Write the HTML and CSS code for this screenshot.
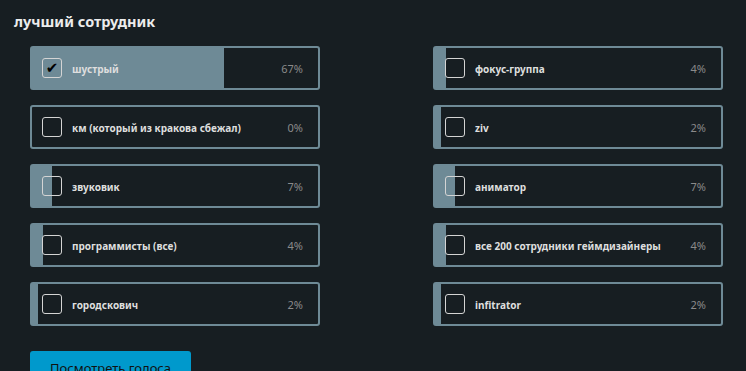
FILE: index.html
```html
<!DOCTYPE html>
<html lang="ru">
<head>
    <meta charset="UTF-8">
    <title>лучший сотрудник</title>
    <link rel="stylesheet" href="styles.css">
</head>
<body>
<div class="poll">
    <h3 class="poll-title">лучший сотрудник</h3>
    <ul class="answers">
        <li class="answer" style="--p:67%"><span class="box checked">&#10004;</span><span class="name">шустрый</span><span class="pct">67%</span></li>
        <li class="answer" style="--p:4%"><span class="box"></span><span class="name">фокус-группа</span><span class="pct">4%</span></li>
        <li class="answer" style="--p:0%"><span class="box"></span><span class="name">км (который из кракова сбежал)</span><span class="pct">0%</span></li>
        <li class="answer" style="--p:2%"><span class="box"></span><span class="name">ziv</span><span class="pct">2%</span></li>
        <li class="answer" style="--p:7%"><span class="box"></span><span class="name">звуковик</span><span class="pct">7%</span></li>
        <li class="answer" style="--p:7%"><span class="box"></span><span class="name">аниматор</span><span class="pct">7%</span></li>
        <li class="answer" style="--p:4%"><span class="box"></span><span class="name">программисты (все)</span><span class="pct">4%</span></li>
        <li class="answer" style="--p:4%"><span class="box"></span><span class="name">все 200 сотрудники геймдизайнеры</span><span class="pct">4%</span></li>
        <li class="answer" style="--p:2%"><span class="box"></span><span class="name">городскович</span><span class="pct">2%</span></li>
        <li class="answer" style="--p:2%"><span class="box"></span><span class="name">infitrator</span><span class="pct">2%</span></li>
    </ul>
    <button class="results">Посмотреть голоса</button>
</div>
</body>
</html>
```

FILE: styles.css
```css
body, ul, li, h3 {
    margin: 0;
    padding: 0;
    list-style: none;
}

body {
    background: #171e22;
    font-family: "Noto Sans", sans-serif;
    color: #dcdcdc;
}

.poll {
    padding: 10px 0 0 30px;
}

.poll-title {
    margin-left: -16px;
    font-size: 14.5px;
    font-weight: bold;
    line-height: 22px;
    color: #ececec;
    height: 36px;
}

.answers {
    display: grid;
    grid-template-columns: 290px 290px;
    column-gap: 113px;
    row-gap: 15px;
}

.answer {
    height: 44px;
    box-sizing: border-box;
    border: 2px solid #6e8a96;
    border-radius: 3px;
    padding: 0 15px 0 10px;
    display: flex;
    align-items: center;
    background: linear-gradient(to right, #6e8a96 var(--p), transparent var(--p));
}

.box {
    width: 20px;
    height: 20px;
    box-sizing: border-box;
    border: 1px solid #d4d4d4;
    border-radius: 3px;
    margin-right: 10px;
    display: flex;
    align-items: center;
    justify-content: center;
    font-family: "DejaVu Sans", sans-serif;
    font-size: 15px;
    font-weight: bold;
    color: #000;
    flex: none;
}

.name {
    flex: 1;
    font-size: 10px;
    font-weight: bold;
    color: #dedede;
    padding-top: 1px;
}

.pct {
    font-size: 11px;
    color: #8a8a8a;
}

.results {
    margin-top: 25px;
    width: 161px;
    height: 34px;
    border: none;
    border-radius: 3px;
    background: #0099cc;
    color: #111;
    font-family: "Noto Sans", sans-serif;
    font-size: 13px;
    padding: 0;
}
```
